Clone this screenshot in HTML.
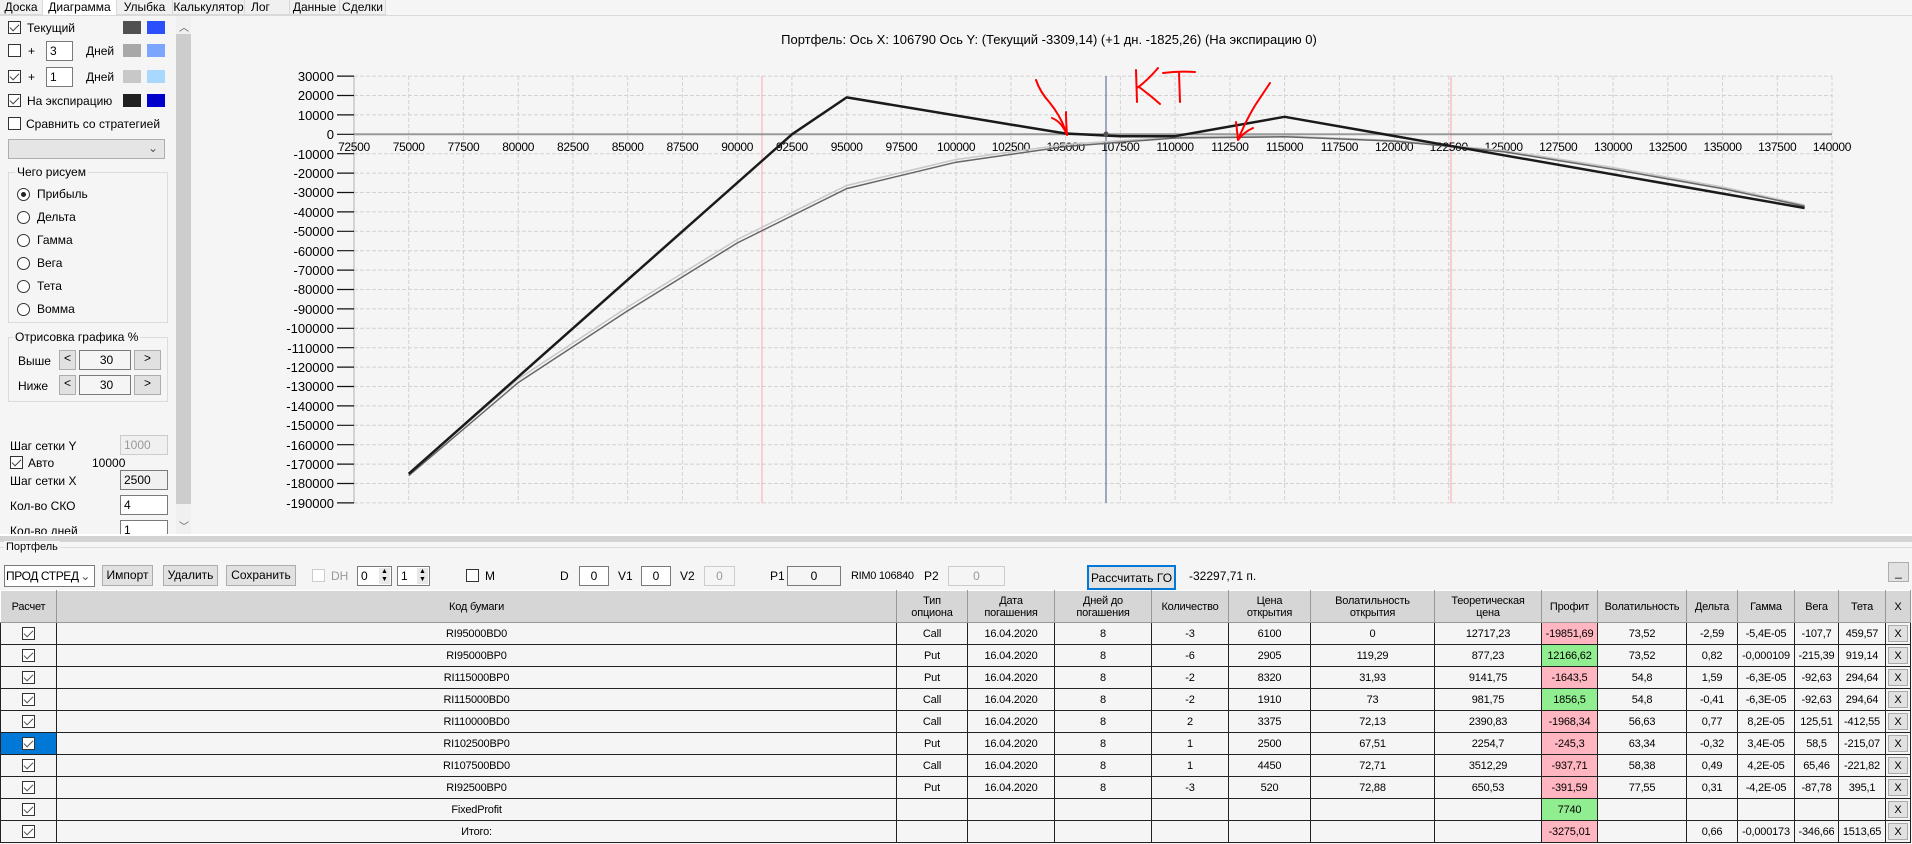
<!DOCTYPE html>
<html><head><meta charset="utf-8">
<style>
*{box-sizing:border-box;margin:0;padding:0}
body{width:1912px;height:844px;overflow:hidden;background:#f5f5f5;font-family:"Liberation Sans",sans-serif;font-size:12px;color:#000;position:relative}
.a{position:absolute;white-space:nowrap}
.tab{position:absolute;top:0;height:15px;line-height:14px;font-size:12px;text-align:center;border-right:1px solid #d9d9d9;background:#f0f0f0;border-bottom:1px solid #d9d9d9}
.cb{position:absolute;width:13px;height:13px;border:1px solid #333;background:#fff}
.cb.k::after{content:"";position:absolute;left:3px;top:0px;width:4px;height:8px;border:solid #444;border-width:0 1.5px 1.5px 0;transform:rotate(45deg)}
.sw{position:absolute;width:18px;height:13px}
.tb{position:absolute;border:1px solid #7a7a7a;background:#fff;height:20px;line-height:18px;padding-left:3px;font-size:12px}
.tb.d{border-color:#ccc;background:#f0f0f0;color:#999}
.btn{position:absolute;border:1px solid #adadad;background:#e1e1e1;text-align:center;font-size:12px}
.rd{position:absolute;width:13px;height:13px;border:1px solid #333;border-radius:50%;background:#fff}
.rd.k::after{content:"";position:absolute;left:3px;top:3px;width:5px;height:5px;border-radius:50%;background:#222}
table{position:absolute;left:0;top:590px;border-collapse:collapse;table-layout:fixed;width:1910px;font-size:11px;letter-spacing:-0.2px}
td,th{border:1px solid #222;text-align:center;height:22px;padding:0;background:#f5f5f5;font-weight:normal;overflow:hidden;white-space:nowrap}
th{background:#d6d6d6;height:32px;line-height:12px;border-color:#fff #999 #999 #fff;white-space:normal;padding:0 6px}
td.p{background:#ffb6c1}td.g{background:#90ee90}
td.x{padding:2px}
td.x div{border:1px solid #aaa;background:#e1e1e1;height:17px;line-height:16px}
.tc{display:inline-block;width:13px;height:13px;border:1px solid #333;background:#fff;position:relative;vertical-align:middle}
.tc::after{content:"";position:absolute;left:3px;top:0;width:4px;height:8px;border:solid #555;border-width:0 1.3px 1.3px 0;transform:rotate(45deg)}
td.sel{background:#0078d7}
</style></head><body>
<div class="tab" style="left:0;width:43px">Доска</div>
<div class="tab" style="left:43px;width:74px;background:#fff;border-bottom:none;height:16px">Диаграмма</div>
<div class="tab" style="left:117px;width:56px">Улыбка</div>
<div class="tab" style="left:173px;width:72px">Калькулятор</div>
<div class="tab" style="left:245px;width:45px;text-align:left;padding-left:6px">Лог</div>
<div class="tab" style="left:290px;width:50px">Данные</div>
<div class="tab" style="left:340px;width:46px">Сделки</div>
<div class="a" style="left:0;top:15px;width:1912px;height:1px;background:#d9d9d9"></div>

<div class="a" style="left:0;top:16px;width:176px;height:518px;background:#f5f5f5"></div>
<div class="cb k" style="left:8px;top:21px"></div><div class="a" style="left:27px;top:21px">Текущий</div>
<div class="sw" style="left:123px;top:21px;background:#505050"></div><div class="sw" style="left:147px;top:21px;background:#2b4ffb"></div>
<div class="cb" style="left:8px;top:44px"></div><div class="a" style="left:28px;top:44px">+</div>
<div class="tb" style="left:46px;top:41px;width:27px">3</div><div class="a" style="left:86px;top:44px">Дней</div>
<div class="sw" style="left:123px;top:44px;background:#a8a8a8"></div><div class="sw" style="left:147px;top:44px;background:#7ba5ff"></div>
<div class="cb k" style="left:8px;top:70px"></div><div class="a" style="left:28px;top:70px">+</div>
<div class="tb" style="left:46px;top:67px;width:27px">1</div><div class="a" style="left:86px;top:70px">Дней</div>
<div class="sw" style="left:123px;top:70px;background:#c8c8c8"></div><div class="sw" style="left:147px;top:70px;background:#a9d8ff"></div>
<div class="cb k" style="left:8px;top:94px"></div><div class="a" style="left:27px;top:94px">На экспирацию</div>
<div class="sw" style="left:123px;top:94px;background:#202020"></div><div class="sw" style="left:147px;top:94px;background:#0000cc"></div>
<div class="cb" style="left:8px;top:117px"></div><div class="a" style="left:26px;top:117px">Сравнить со стратегией</div>
<div class="a" style="left:8px;top:139px;width:157px;height:20px;border:1px solid #adadad;background:#e5e5e5"><span style="position:absolute;right:6px;top:1px;color:#555">⌄</span></div>
<div class="a" style="left:8px;top:172px;width:160px;height:151px;border:1px solid #dcdcdc"></div>
<div class="a" style="left:15px;top:165px;background:#f5f5f5;padding:0 2px">Чего рисуем</div>
<div class="rd k" style="left:17px;top:188px"></div><div class="a" style="left:37px;top:187px">Прибыль</div>
<div class="rd" style="left:17px;top:211px"></div><div class="a" style="left:37px;top:210px">Дельта</div>
<div class="rd" style="left:17px;top:234px"></div><div class="a" style="left:37px;top:233px">Гамма</div>
<div class="rd" style="left:17px;top:257px"></div><div class="a" style="left:37px;top:256px">Вега</div>
<div class="rd" style="left:17px;top:280px"></div><div class="a" style="left:37px;top:279px">Тета</div>
<div class="rd" style="left:17px;top:303px"></div><div class="a" style="left:37px;top:302px">Вомма</div>
<div class="a" style="left:8px;top:337px;width:160px;height:65px;border:1px solid #dcdcdc"></div>
<div class="a" style="left:13px;top:330px;background:#f5f5f5;padding:0 2px">Отрисовка графика %</div>
<div class="a" style="left:18px;top:354px">Выше</div>
<div class="btn" style="left:59px;top:350px;width:17px;height:20px">&lt;</div>
<div class="tb" style="left:79px;top:350px;width:52px;text-align:center;background:#f5f5f5">30</div>
<div class="btn" style="left:134px;top:350px;width:27px;height:20px">&gt;</div>
<div class="a" style="left:18px;top:379px">Ниже</div>
<div class="btn" style="left:59px;top:375px;width:17px;height:20px">&lt;</div>
<div class="tb" style="left:79px;top:375px;width:52px;text-align:center;background:#f5f5f5">30</div>
<div class="btn" style="left:134px;top:375px;width:27px;height:20px">&gt;</div>
<div class="a" style="left:10px;top:439px">Шаг сетки Y</div>
<div class="tb d" style="left:120px;top:435px;width:48px">1000</div>
<div class="cb k" style="left:10px;top:456px"></div><div class="a" style="left:28px;top:456px">Авто</div>
<div class="a" style="left:92px;top:456px">10000</div>
<div class="a" style="left:10px;top:474px">Шаг сетки X</div>
<div class="tb" style="left:120px;top:470px;width:48px;background:#f0f0f0">2500</div>
<div class="a" style="left:10px;top:499px">Кол-во СКО</div>
<div class="tb" style="left:120px;top:495px;width:48px">4</div>
<div class="a" style="left:10px;top:524px;height:10px;overflow:hidden">Кол-во дней</div>
<div class="tb" style="left:120px;top:520px;width:48px;height:14px;border-bottom:none">1</div>
<div class="a" style="left:176px;top:16px;width:15px;height:518px;background:#f0f0f0"></div>
<div class="a" style="left:176px;top:34px;width:15px;height:470px;background:#cdcdcd"></div>
<div class="a" style="left:179px;top:19px;font-size:10px;color:#555">︿</div>
<div class="a" style="left:179px;top:518px;font-size:10px;color:#555">﹀</div>

<svg class="a" style="left:0;top:0" width="1912" height="536" xmlns="http://www.w3.org/2000/svg" font-family="Liberation Sans, sans-serif" font-size="12">
<text x="1049" y="44" text-anchor="middle" font-size="13">Портфель: Ось X: 106790 Ось Y:  (Текущий -3309,14)  (+1 дн. -1825,26)  (На экспирацию 0)</text>
<g stroke="#d2d2d2" stroke-dasharray="4,2" stroke-width="1">
<path d="M408.7 76V503M463.4 76V503M518.2 76V503M572.9 76V503M627.7 76V503M682.4 76V503M737.2 76V503M791.9 76V503M846.7 76V503M901.4 76V503M956.1 76V503M1010.9 76V503M1065.6 76V503M1120.4 76V503M1175.1 76V503M1229.9 76V503M1284.6 76V503M1339.4 76V503M1394.1 76V503M1448.8 76V503M1503.6 76V503M1558.3 76V503M1613.1 76V503M1667.8 76V503M1722.6 76V503M1777.3 76V503M1832 76V503"/>
<path d="M354 76.1H1832M354 95.5H1832M354 114.9H1832M354 153.7H1832M354 173.1H1832M354 192.5H1832M354 211.9H1832M354 231.3H1832M354 250.7H1832M354 270.1H1832M354 289.5H1832M354 308.9H1832M354 328.3H1832M354 347.7H1832M354 367.1H1832M354 386.5H1832M354 405.9H1832M354 425.3H1832M354 444.7H1832M354 464.1H1832M354 483.5H1832M354 502.9H1832"/>
</g>
<path d="M762 76V503M1451 76V503" stroke="#ffb0b8" stroke-width="1.2"/>
<path d="M1106 76V503" stroke="#8090a8" stroke-width="1.5"/>
<path d="M354 76V503" stroke="#c8c8c8" stroke-width="1.5"/>
<path d="M354 134.3H1832" stroke="#999" stroke-width="2"/>
<g stroke="#111" stroke-width="1.2">
<path d="M337 76.1H354M337 95.5H354M337 114.9H354M337 134.3H354M337 153.7H354M337 173.1H354M337 192.5H354M337 211.9H354M337 231.3H354M337 250.7H354M337 270.1H354M337 289.5H354M337 308.9H354M337 328.3H354M337 347.7H354M337 367.1H354M337 386.5H354M337 405.9H354M337 425.3H354M337 444.7H354M337 464.1H354M337 483.5H354M337 502.9H354"/>
</g>
<g text-anchor="end" font-size="13">
<text x="334" y="81">30000</text><text x="334" y="100">20000</text><text x="334" y="120">10000</text><text x="334" y="139">0</text>
<text x="334" y="159">-10000</text><text x="334" y="178">-20000</text><text x="334" y="197">-30000</text><text x="334" y="217">-40000</text><text x="334" y="236">-50000</text><text x="334" y="256">-60000</text><text x="334" y="275">-70000</text><text x="334" y="294">-80000</text><text x="334" y="314">-90000</text><text x="334" y="333">-100000</text><text x="334" y="353">-110000</text><text x="334" y="372">-120000</text><text x="334" y="391">-130000</text><text x="334" y="411">-140000</text><text x="334" y="430">-150000</text><text x="334" y="450">-160000</text><text x="334" y="469">-170000</text><text x="334" y="488">-180000</text><text x="334" y="508">-190000</text>
</g>
<g text-anchor="middle" font-size="12" letter-spacing="-0.3">
<text x="354" y="151">72500</text><text x="408.7" y="151">75000</text><text x="463.4" y="151">77500</text><text x="518.2" y="151">80000</text><text x="572.9" y="151">82500</text><text x="627.7" y="151">85000</text><text x="682.4" y="151">87500</text><text x="737.2" y="151">90000</text><text x="791.9" y="151">92500</text><text x="846.7" y="151">95000</text><text x="901.4" y="151">97500</text><text x="956.1" y="151">100000</text><text x="1010.9" y="151">102500</text><text x="1065.6" y="151">105000</text><text x="1120.4" y="151">107500</text><text x="1175.1" y="151">110000</text><text x="1229.9" y="151">112500</text><text x="1284.6" y="151">115000</text><text x="1339.4" y="151">117500</text><text x="1394.1" y="151">120000</text><text x="1448.8" y="151">122500</text><text x="1503.6" y="151">125000</text><text x="1558.3" y="151">127500</text><text x="1613.1" y="151">130000</text><text x="1667.8" y="151">132500</text><text x="1722.6" y="151">135000</text><text x="1777.3" y="151">137500</text><text x="1832" y="151">140000</text>
</g>
<polyline fill="none" stroke="#c8c8c8" stroke-width="1.5" points="410,472 518.2,379 627.7,307 737.2,239.5 846.7,185.5 956.1,159.5 1065.6,144.5 1175.1,137 1284.6,136 1394.1,140.5 1503.6,150.5 1613,167.5 1722.5,187 1804.6,205"/>
<polyline fill="none" stroke="#666" stroke-width="1.5" points="408.7,475.7 518.2,382.6 627.7,310.8 737.2,243 846.7,188.6 956.1,162.2 1065.6,146.5 1175.1,138 1284.6,136.8 1394.1,141.1 1503.6,151.8 1613,169.2 1722.5,188.6 1804.6,206.1"/>
<polyline fill="none" stroke="#1a1a1a" stroke-width="2.5" stroke-linejoin="round" points="408.7,473.8 792,134.3 846.7,97.4 1011,124.6 1065.6,133.5 1120,136.2 1175,136.2 1284.6,116.8 1804.6,208"/>
<circle cx="1106" cy="134" r="2.5" fill="#555"/>
<g stroke="#f00" stroke-width="2" fill="none" stroke-linecap="round">
<path d="M1036 80 Q1040 92 1050 103 Q1062 118 1067 135"/><path d="M1052 118 Q1062 122 1067 135 Q1066 120 1066 112"/>
<path d="M1270 83 Q1262 95 1256 104 Q1246 120 1238 140"/><path d="M1238 140 Q1244 132 1253 128 M1238 140 Q1237 130 1236 122"/>
<path d="M1136 70 L1137 102 M1137 88 Q1148 80 1158 68 M1139 87 Q1150 95 1160 104"/>
<path d="M1163 73 Q1178 71 1195 72 M1179 72 L1180 102"/>
</g>
</svg>

<div class="a" style="left:0;top:534px;width:1912px;height:2px;background:#fff"></div>
<div class="a" style="left:0;top:536px;width:1912px;height:6px;background:#d3d3d3"></div>
<div class="a" style="left:0;top:547px;width:1912px;height:1px;background:#dcdcdc"></div>
<div class="a" style="left:4px;top:541px;background:#f5f5f5;padding:0 2px;font-size:11px">Портфель</div>

<div class="a" style="left:4px;top:565px;width:91px;height:22px;border:1px solid #7a7a7a;background:#fff;line-height:20px;padding-left:1px;overflow:hidden;font-size:12px;letter-spacing:-0.4px">ПРОД СТРЕД<span style="position:absolute;right:4px;color:#555">⌄</span></div>
<div class="btn" style="left:102px;top:565px;width:51px;height:21px;line-height:19px">Импорт</div>
<div class="btn" style="left:163px;top:565px;width:55px;height:21px;line-height:19px">Удалить</div>
<div class="btn" style="left:226px;top:565px;width:70px;height:21px;line-height:19px">Сохранить</div>
<div class="cb" style="left:312px;top:569px;border-color:#ccc"></div><div class="a" style="left:331px;top:569px;color:#999">DH</div>
<div class="tb" style="left:357px;top:566px;width:35px;height:20px">0<span style="position:absolute;right:1px;top:1px;width:11px;height:16px;background:#e8e8e8;font-size:7px;line-height:8px;text-align:center">▲<br>▼</span></div>
<div class="tb" style="left:397px;top:566px;width:33px;height:20px">1<span style="position:absolute;right:1px;top:1px;width:11px;height:16px;background:#e8e8e8;font-size:7px;line-height:8px;text-align:center">▲<br>▼</span></div>
<div class="cb" style="left:466px;top:569px"></div><div class="a" style="left:485px;top:569px">M</div>
<div class="a" style="left:560px;top:569px">D</div><div class="tb" style="left:579px;top:566px;width:30px;text-align:center;padding:0">0</div>
<div class="a" style="left:618px;top:569px">V1</div><div class="tb" style="left:641px;top:566px;width:30px;text-align:center;padding:0">0</div>
<div class="a" style="left:680px;top:569px">V2</div><div class="tb d" style="left:704px;top:566px;width:31px;text-align:center;padding:0;background:#f5f5f5">0</div>
<div class="a" style="left:770px;top:569px">P1</div><div class="tb" style="left:787px;top:566px;width:54px;text-align:center;padding:0;background:#f5f5f5">0</div>
<div class="a" style="left:851px;top:570px;font-size:11px;letter-spacing:-0.3px">RIM0 106840</div>
<div class="a" style="left:924px;top:569px">P2</div><div class="tb d" style="left:948px;top:566px;width:57px;text-align:center;padding:0;background:#f5f5f5">0</div>
<div class="btn" style="left:1087px;top:565px;width:89px;height:25px;line-height:22px;border:2px solid #0078d7">Рассчитать ГО</div>
<div class="a" style="left:1189px;top:569px">-32297,71 п.</div>
<div class="btn" style="left:1888px;top:562px;width:21px;height:20px;line-height:18px">_</div>

<table>
<colgroup><col style="width:56px"><col style="width:840px"><col style="width:71px"><col style="width:87px"><col style="width:97px"><col style="width:77px"><col style="width:82px"><col style="width:124px"><col style="width:107px"><col style="width:56px"><col style="width:89px"><col style="width:51px"><col style="width:57px"><col style="width:44px"><col style="width:47px"><col style="width:25px"></colgroup>
<tr><th>Расчет</th><th>Код бумаги</th><th>Тип опциона</th><th>Дата погашения</th><th>Дней до погашения</th><th>Количество</th><th>Цена открытия</th><th>Волатильность открытия</th><th>Теоретическая цена</th><th>Профит</th><th style="padding:0">Волатильность</th><th>Дельта</th><th>Гамма</th><th>Вега</th><th>Тета</th><th style="padding:0">X</th></tr>
<tr><td><span class="tc"></span></td><td>RI95000BD0</td><td>Call</td><td>16.04.2020</td><td>8</td><td>-3</td><td>6100</td><td>0</td><td>12717,23</td><td class="p">-19851,69</td><td>73,52</td><td>-2,59</td><td>-5,4E-05</td><td>-107,7</td><td>459,57</td><td class="x"><div>X</div></td></tr>
<tr><td><span class="tc"></span></td><td>RI95000BP0</td><td>Put</td><td>16.04.2020</td><td>8</td><td>-6</td><td>2905</td><td>119,29</td><td>877,23</td><td class="g">12166,62</td><td>73,52</td><td>0,82</td><td>-0,000109</td><td>-215,39</td><td>919,14</td><td class="x"><div>X</div></td></tr>
<tr><td><span class="tc"></span></td><td>RI115000BP0</td><td>Put</td><td>16.04.2020</td><td>8</td><td>-2</td><td>8320</td><td>31,93</td><td>9141,75</td><td class="p">-1643,5</td><td>54,8</td><td>1,59</td><td>-6,3E-05</td><td>-92,63</td><td>294,64</td><td class="x"><div>X</div></td></tr>
<tr><td><span class="tc"></span></td><td>RI115000BD0</td><td>Call</td><td>16.04.2020</td><td>8</td><td>-2</td><td>1910</td><td>73</td><td>981,75</td><td class="g">1856,5</td><td>54,8</td><td>-0,41</td><td>-6,3E-05</td><td>-92,63</td><td>294,64</td><td class="x"><div>X</div></td></tr>
<tr><td><span class="tc"></span></td><td>RI110000BD0</td><td>Call</td><td>16.04.2020</td><td>8</td><td>2</td><td>3375</td><td>72,13</td><td>2390,83</td><td class="p">-1968,34</td><td>56,63</td><td>0,77</td><td>8,2E-05</td><td>125,51</td><td>-412,55</td><td class="x"><div>X</div></td></tr>
<tr><td class="sel"><span class="tc"></span></td><td>RI102500BP0</td><td>Put</td><td>16.04.2020</td><td>8</td><td>1</td><td>2500</td><td>67,51</td><td>2254,7</td><td class="p">-245,3</td><td>63,34</td><td>-0,32</td><td>3,4E-05</td><td>58,5</td><td>-215,07</td><td class="x"><div>X</div></td></tr>
<tr><td><span class="tc"></span></td><td>RI107500BD0</td><td>Call</td><td>16.04.2020</td><td>8</td><td>1</td><td>4450</td><td>72,71</td><td>3512,29</td><td class="p">-937,71</td><td>58,38</td><td>0,49</td><td>4,2E-05</td><td>65,46</td><td>-221,82</td><td class="x"><div>X</div></td></tr>
<tr><td><span class="tc"></span></td><td>RI92500BP0</td><td>Put</td><td>16.04.2020</td><td>8</td><td>-3</td><td>520</td><td>72,88</td><td>650,53</td><td class="p">-391,59</td><td>77,55</td><td>0,31</td><td>-4,2E-05</td><td>-87,78</td><td>395,1</td><td class="x"><div>X</div></td></tr>
<tr><td><span class="tc"></span></td><td>FixedProfit</td><td></td><td></td><td></td><td></td><td></td><td></td><td></td><td class="g">7740</td><td></td><td></td><td></td><td></td><td></td><td class="x"><div>X</div></td></tr>
<tr><td><span class="tc"></span></td><td>Итого:</td><td></td><td></td><td></td><td></td><td></td><td></td><td></td><td class="p">-3275,01</td><td></td><td>0,66</td><td>-0,000173</td><td>-346,66</td><td>1513,65</td><td class="x"><div>X</div></td></tr>
</table>
</body></html>
